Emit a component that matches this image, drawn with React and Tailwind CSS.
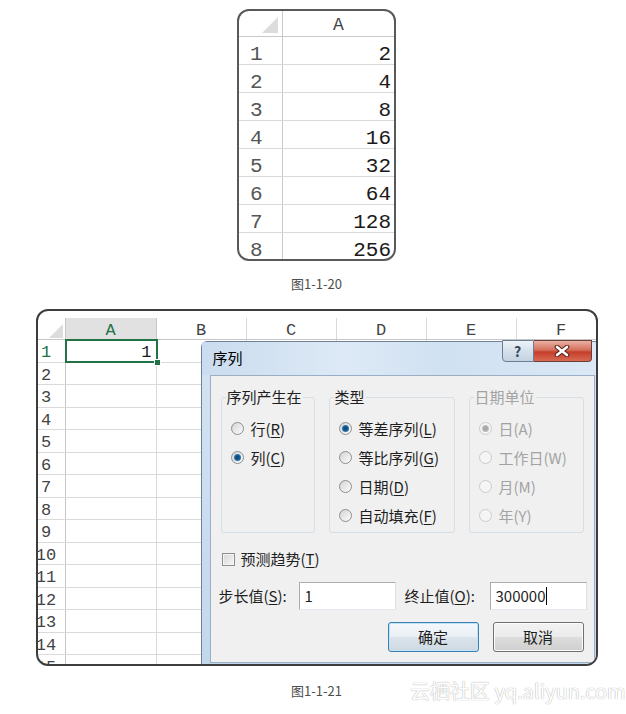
import React from "react";

const MONO = "font-['Liberation_Mono',monospace]";
const UI = "font-['Noto_Sans_CJK_SC',sans-serif]";

const topValues = [2, 4, 8, 16, 32, 64, 128, 256];
const letters = ["B", "C", "D", "E", "F"];
const rowNums = Array.from({ length: 15 }, (_, i) => i + 1);

const Key = ({ children }) => (
  <span className="underline underline-offset-[2px]">{children}</span>
);

const Corner = ({ size }) => (
  <svg width={size} height={size} viewBox="0 0 16 16">
    <polygon points="16,0 16,16 0,16" fill="#dcdcdc" />
  </svg>
);

function Radio({ checked, disabled }) {
  return (
    <span
      className={`flex h-[13px] w-[13px] shrink-0 items-center justify-center rounded-full border ${
        disabled
          ? "border-[#cbcbcb] bg-[#f5f5f5]"
          : "border-[#8e8f8f] bg-[linear-gradient(135deg,#d4d4d4,#fcfcfc)]"
      }`}
    >
      {checked && (
        <span
          className={`h-[7px] w-[7px] rounded-full ${
            disabled
              ? "bg-[radial-gradient(circle,#a8a8a8_35%,#d8d8d8)]"
              : "bg-[radial-gradient(circle,#0e4f84_35%,#62aee2)]"
          }`}
        />
      )}
    </span>
  );
}

function Option({ checked, disabled, children }) {
  return (
    <div className="flex h-[29px] items-center gap-[7px]">
      <Radio checked={checked} disabled={disabled} />
      <span className={disabled ? "text-[#a3a3a3]" : "text-[#1e1e1e]"}>{children}</span>
    </div>
  );
}

function Group({ title, width, disabled, children }) {
  return (
    <fieldset className={`${width} rounded-[3px] border border-[#d5dfe5] pb-[2px]`}>
      <legend
        className={`ml-[4px] px-[1px] text-[15px] leading-[20px] ${
          disabled ? "text-[#a3a3a3]" : "text-[#1e1e1e]"
        }`}
      >
        {title}
      </legend>
      <div className="pl-[9px] pt-[7px]">{children}</div>
    </fieldset>
  );
}

function WinButton({ primary, children }) {
  return (
    <button
      className={`flex h-[30px] w-[91px] items-center justify-center rounded-[3px] border text-[15px] text-[#1e1e1e] ${
        primary
          ? "border-[#3c7fb1] bg-[linear-gradient(#f4f8fb_0%,#e9eff4_50%,#dbe4ec_50%,#cfd9e3_100%)] shadow-[inset_0_0_0_1px_#bfe3f8]"
          : "border-[#707070] bg-[linear-gradient(#f2f2f2_0%,#ebebeb_50%,#dddddd_50%,#cfcfcf_100%)] shadow-[inset_0_0_0_1px_#fcfcfc]"
      }`}
    >
      {children}
    </button>
  );
}

function SeriesDialog() {
  return (
    <div
      className={`absolute left-[163px] top-[30px] w-[410px] rounded-tl-[6px] border border-[#6f8197] bg-[linear-gradient(180deg,#d3e3f3,#c3d7ec)] pb-[8px] ${UI}`}
    >
      <div className="relative flex h-[33px] items-center bg-[linear-gradient(90deg,#cadcef,#dde9f6_35%,#d0e1f2_60%,#dce8f5)] pl-[11px] text-[15px] text-black">
        序列
        <div className="absolute left-[300px] top-[-2px] flex">
          <div className="flex h-[22px] w-[32px] items-center justify-center rounded-bl-[4px] border border-[#6d7e93] bg-[linear-gradient(#eef3f8,#d5e0ec_50%,#c3d2e2)] text-[14px] font-bold text-[#34465a]">
            ?
          </div>
          <div className="flex h-[22px] w-[58px] items-center justify-center rounded-br-[4px] border border-l-0 border-[#6b3f37] bg-[linear-gradient(#eab1a4,#d4705c_45%,#c43f2a_55%,#d96a52)]">
            <svg width="18" height="12" viewBox="0 0 18 12">
              <path d="M4 2 L14 10 M14 2 L4 10" stroke="#5b2219" strokeWidth="4.6" strokeLinecap="round" />
              <path d="M4 2 L14 10 M14 2 L4 10" stroke="#ffffff" strokeWidth="2.6" strokeLinecap="round" />
            </svg>
          </div>
        </div>
      </div>

      <div className="ml-[8px] w-[385px] border border-[#9aaec4] bg-[#f0f0f0] pb-[10px] text-[15px] leading-[20px]">
        <div className="mt-[11px] flex gap-[14px] pl-[10px]">
          <Group title="序列产生在" width="w-[94px]">
            <Option>
              行(<Key>R</Key>)
            </Option>
            <Option checked>
              列(<Key>C</Key>)
            </Option>
          </Group>
          <Group title="类型" width="w-[126px]">
            <Option checked>
              等差序列(<Key>L</Key>)
            </Option>
            <Option>
              等比序列(<Key>G</Key>)
            </Option>
            <Option>
              日期(<Key>D</Key>)
            </Option>
            <Option>
              自动填充(<Key>F</Key>)
            </Option>
          </Group>
          <Group title="日期单位" width="w-[115px]" disabled>
            <Option checked disabled>日(A)</Option>
            <Option disabled>工作日(W)</Option>
            <Option disabled>月(M)</Option>
            <Option disabled>年(Y)</Option>
          </Group>
        </div>

        <div className="mt-[16px] flex h-[20px] items-center gap-[6px] pl-[11px] text-[#1e1e1e]">
          <span className="h-[13px] w-[13px] border border-[#8f8f8f] bg-[linear-gradient(135deg,#d6d6d6,#f6f6f6)] shadow-[inset_0_0_0_1px_#f4f4f4]" />
          <span>
            预测趋势(<Key>T</Key>)
          </span>
        </div>

        <div className="mt-[13px] flex h-[28px] items-center pl-[8px] text-[#1e1e1e]">
          <span className="w-[80px]">
            步长值(<Key>S</Key>):
          </span>
          <div className="flex h-[28px] w-[97px] items-center border border-[#abadb3] border-r-[#dbdfe6] border-b-[#e3e9ef] bg-white pl-[5px]">
            1
          </div>
          <span className="ml-[9px] w-[85px]">
            终止值(<Key>O</Key>):
          </span>
          <div className="flex h-[28px] w-[97px] items-center border border-[#abadb3] border-r-[#dbdfe6] border-b-[#e3e9ef] bg-white pl-[5px]">
            300000
            <span className="ml-[1px] h-[18px] w-[1px] bg-black" />
          </div>
        </div>

        <div className="mt-[12px] flex justify-end gap-[14px] pr-[10px]">
          <WinButton primary>确定</WinButton>
          <WinButton>取消</WinButton>
        </div>
      </div>
    </div>
  );
}

export default function App() {
  return (
    <div className="flex min-h-[714px] w-[626px] flex-col items-center bg-white pl-[7px] pt-[9px]">
      {/* figure 1-1-20 */}
      <div className={`h-[252px] w-[159px] overflow-hidden rounded-[12px] border-2 border-[#595959] bg-white ${MONO}`}>
        <div className="flex h-[26px] border-b border-[#c9c9c9]">
          <div className="flex w-[44px] items-end justify-end border-r border-[#c9c9c9] pb-[3px] pr-[4px]">
            <Corner size={16} />
          </div>
          <div className="flex flex-1 items-center justify-center pt-[4px] text-[18px] text-[#444]">A</div>
        </div>
        {topValues.map((v, i) => (
          <div key={v} className="flex h-[28px] border-b border-[#dadada] text-[21px]">
            <div className="flex w-[44px] items-center border-r border-[#c9c9c9] pl-[11px] pt-[8px] text-[#555]">
              {i + 1}
            </div>
            <div className="flex flex-1 items-center justify-end pr-[3px] pt-[8px] text-[#1a1a1a]">{v}</div>
          </div>
        ))}
      </div>
      <p className={`mt-[14px] h-[18px] text-[13px] leading-[18px] text-[#4d4d4d] ${UI}`}>图1-1-20</p>

      {/* figure 1-1-21 */}
      <div className={`relative mt-[16px] h-[357px] w-[562px] overflow-hidden rounded-[12px] border-2 border-[#3d3d3d] bg-white ${MONO}`}>
        <div className="h-[7px]" />
        <div className="flex h-[22px] border-b border-[#c6c6c6] text-[17px] text-[#444]">
          <div className="flex w-[28px] shrink-0 items-end justify-end border-r border-[#c6c6c6] pb-[1px] pr-[2px]">
            <Corner size={14} />
          </div>
          <div className="flex w-[91px] shrink-0 items-center justify-center border-r border-[#c6c6c6] bg-[#e1e1e1] pt-[4px] text-[#217346]">
            A
          </div>
          {letters.map((c) => (
            <div key={c} className="flex w-[90px] shrink-0 items-center justify-center border-r border-[#dadada] pt-[4px]">
              {c}
            </div>
          ))}
        </div>
        {rowNums.map((n) => (
          <div key={n} className="flex h-[22.5px] border-b border-[#dadada] text-[17px]">
            <div
              className={`flex w-[28px] shrink-0 items-center justify-center border-r border-[#c6c6c6] pr-[10px] pt-[4px] ${
                n === 1 ? "text-[#217346]" : "text-[#444]"
              }`}
            >
              {n}
            </div>
            {n === 1 ? (
              <div className="relative flex w-[91px] shrink-0 items-center justify-end pr-[5px] pt-[4px] text-[#1a1a1a] outline-2 outline-[#217346] -outline-offset-1">
                1
                <span className="absolute bottom-[-4px] right-[-4px] h-[7px] w-[7px] border border-white bg-[#217346]" />
              </div>
            ) : (
              <div className="w-[91px] shrink-0 border-r border-[#dadada]" />
            )}
            {letters.map((c) => (
              <div key={c} className="w-[90px] shrink-0 border-r border-[#dadada]" />
            ))}
          </div>
        ))}
        <SeriesDialog />
      </div>

      <div className={`relative mt-[16px] flex h-[18px] w-full justify-center ${UI}`}>
        <span className="text-[13px] leading-[18px] text-[#4d4d4d]">图1-1-21</span>
        <span className="absolute left-[403px] top-[-3px] whitespace-nowrap text-[20px] leading-[24px] text-white [text-shadow:0_0_1px_#b5b5b5,0_0_1px_#b5b5b5]">
          云栖社区 yq.aliyun.com
        </span>
      </div>
    </div>
  );
}
